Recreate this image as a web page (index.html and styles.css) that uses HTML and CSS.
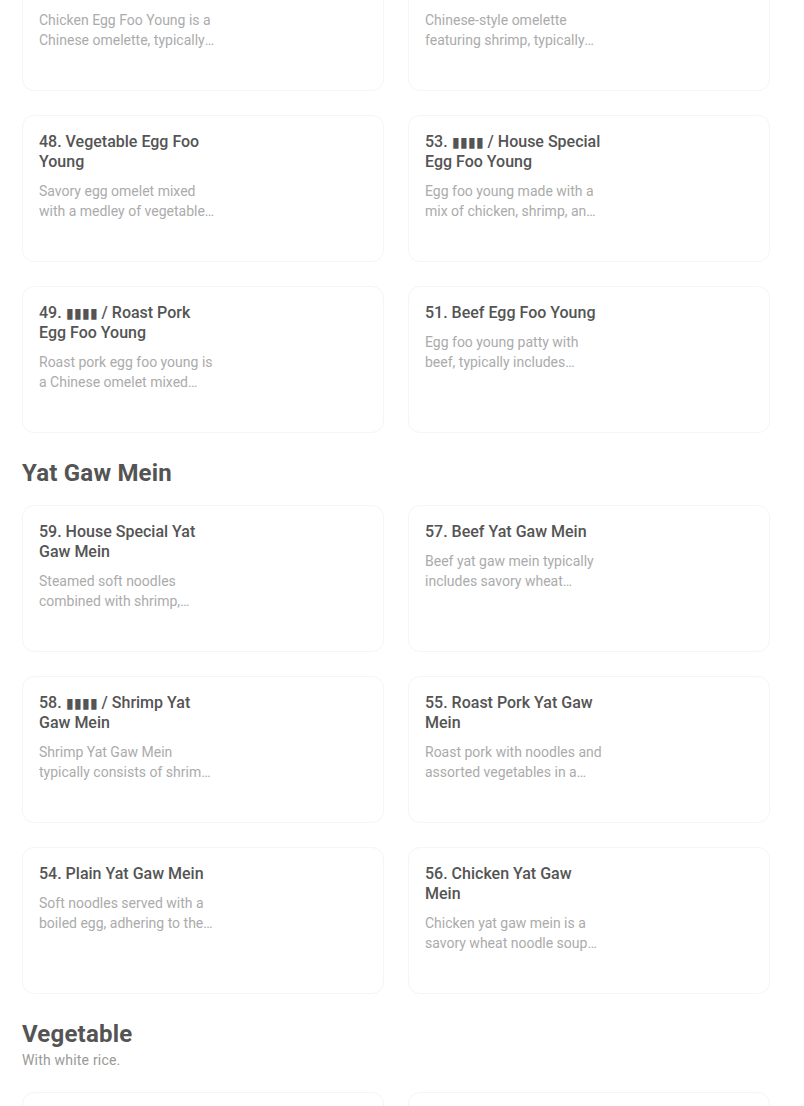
FILE: index.html
```html
<!DOCTYPE html>
<html lang="en">
<head>
    <meta charset="UTF-8">
    <meta name="viewport" content="width=device-width, initial-scale=1.0">
    <title>Menu</title>
    <link rel="stylesheet" href="styles.css">
</head>
<body>
    <main class="menu">
        <section class="menu-section">
            <div class="item-grid">
                <div class="item-card">
                    <div class="item-text">
                        <h3 class="item-title">47. Chicken Egg Foo Young</h3>
                        <p class="item-desc">Chicken Egg Foo Young is a Chinese omelette, typically made with chicken and vegetables.</p>
                    </div>
                </div>
                <div class="item-card">
                    <div class="item-text">
                        <h3 class="item-title">52. Shrimp Egg Foo Young</h3>
                        <p class="item-desc">Chinese-style omelette featuring shrimp, typically served with brown gravy.</p>
                    </div>
                </div>
                <div class="item-card">
                    <div class="item-text">
                        <h3 class="item-title">48. Vegetable Egg Foo Young</h3>
                        <p class="item-desc">Savory egg omelet mixed with a medley of vegetables, topped with gravy.</p>
                    </div>
                </div>
                <div class="item-card">
                    <div class="item-text">
                        <h3 class="item-title">53. <span class="tofu">▮▮▮▮</span> / House Special Egg Foo Young</h3>
                        <p class="item-desc">Egg foo young made with a mix of chicken, shrimp, and roast pork.</p>
                    </div>
                </div>
                <div class="item-card">
                    <div class="item-text">
                        <h3 class="item-title">49. <span class="tofu">▮▮▮▮</span> / Roast Pork Egg Foo Young</h3>
                        <p class="item-desc">Roast pork egg foo young is a Chinese omelet mixed with roast pork and vegetables.</p>
                    </div>
                </div>
                <div class="item-card">
                    <div class="item-text">
                        <h3 class="item-title">51. Beef Egg Foo Young</h3>
                        <p class="item-desc">Egg foo young patty with beef, typically includes onions and bean sprouts.</p>
                    </div>
                </div>
            </div>
        </section>

        <section class="menu-section">
            <h2 class="section-title">Yat Gaw Mein</h2>
            <div class="item-grid">
                <div class="item-card">
                    <div class="item-text">
                        <h3 class="item-title">59. House Special Yat Gaw Mein</h3>
                        <p class="item-desc">Steamed soft noodles combined with shrimp, chicken and roast pork in broth.</p>
                    </div>
                </div>
                <div class="item-card">
                    <div class="item-text">
                        <h3 class="item-title">57. Beef Yat Gaw Mein</h3>
                        <p class="item-desc">Beef yat gaw mein typically includes savory wheat noodles in a beef broth.</p>
                    </div>
                </div>
                <div class="item-card">
                    <div class="item-text">
                        <h3 class="item-title">58. <span class="tofu">▮▮▮▮</span> / Shrimp Yat Gaw Mein</h3>
                        <p class="item-desc">Shrimp Yat Gaw Mein typically consists of shrimp and noodles in a savory broth.</p>
                    </div>
                </div>
                <div class="item-card">
                    <div class="item-text">
                        <h3 class="item-title">55. Roast Pork Yat Gaw Mein</h3>
                        <p class="item-desc">Roast pork with noodles and assorted vegetables in a savory broth.</p>
                    </div>
                </div>
                <div class="item-card">
                    <div class="item-text">
                        <h3 class="item-title">54. Plain Yat Gaw Mein</h3>
                        <p class="item-desc">Soft noodles served with a boiled egg, adhering to the traditional style.</p>
                    </div>
                </div>
                <div class="item-card">
                    <div class="item-text">
                        <h3 class="item-title">56. Chicken Yat Gaw Mein</h3>
                        <p class="item-desc">Chicken yat gaw mein is a savory wheat noodle soup with chicken.</p>
                    </div>
                </div>
            </div>
        </section>

        <section class="menu-section">
            <h2 class="section-title">Vegetable</h2>
            <p class="section-sub">With white rice.</p>
            <div class="item-grid">
                <div class="item-card"></div>
                <div class="item-card"></div>
            </div>
        </section>
    </main>
</body>
</html>
```

FILE: styles.css
```css
body {
    margin: 0;
    background: #fff;
    font-family: Roboto, "Liberation Sans", sans-serif;
    color: #545454;
}

/* page is shown scrolled, first row starts above the fold */
.menu {
    width: 748px;
    margin: -56px 0 0 22px;
}

.section-title {
    margin: 24px 0 16px;
    font-size: 24px;
    line-height: 32px;
    font-weight: 700;
    letter-spacing: 0.2px;
    color: #545454;
}

.section-sub {
    margin: -16px 0 22px;
    font-size: 14px;
    line-height: 20px;
    letter-spacing: 0.2px;
    color: #999999;
}

.item-grid {
    display: grid;
    grid-template-columns: 1fr 1fr;
    gap: 24px;
}

.item-card {
    box-sizing: border-box;
    height: 147px;
    padding: 16px;
    border: 1px solid #f5f5f5;
    border-radius: 12px;
    box-shadow: 0 0 1px rgba(0, 0, 0, 0.02);
}

.item-text {
    width: 178px;
}

.item-title {
    margin: 0;
    font-size: 16px;
    line-height: 20px;
    font-weight: 500;
    color: #545454;
}

/* missing-glyph boxes, kept narrow like the original */
.tofu {
    font-size: 14px;
    line-height: 1;
}

.item-desc {
    margin: 9px 0 0;
    font-size: 14px;
    line-height: 20px;
    color: #ababab;
    display: -webkit-box;
    -webkit-line-clamp: 2;
    -webkit-box-orient: vertical;
    overflow: hidden;
}
```
